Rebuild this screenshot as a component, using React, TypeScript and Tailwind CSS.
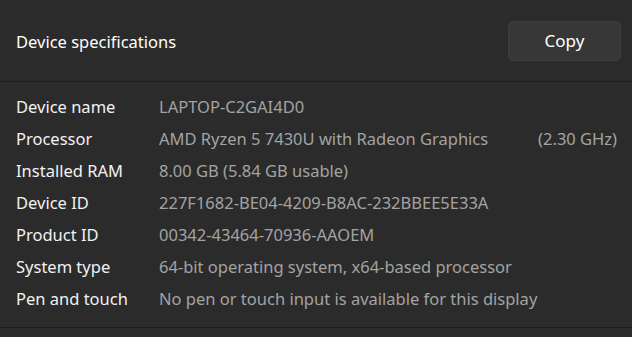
import React from "react";

const specs = [
  { label: "Device name", value: "LAPTOP-C2GAI4D0" },
  { label: "Processor", value: "AMD Ryzen 5 7430U with Radeon Graphics", extra: "(2.30 GHz)" },
  { label: "Installed RAM", value: "8.00 GB (5.84 GB usable)" },
  { label: "Device ID", value: "227F1682-BE04-4209-B8AC-232BBEE5E33A" },
  { label: "Product ID", value: "00342-43464-70936-AAOEM" },
  { label: "System type", value: "64-bit operating system, x64-based processor" },
  { label: "Pen and touch", value: "No pen or touch input is available for this display" },
];

export default function App() {
  return (
    <div
      className="w-[632px] h-[337px] bg-[#2b2b2b] text-white overflow-hidden"
      style={{ fontFamily: '"Noto Sans", "Open Sans", sans-serif' }}
    >
      {/* Header */}
      <div className="h-[81px] flex items-center justify-between pl-4 pr-[11px]">
        <h2 className="text-[16.5px] pt-[3px]">Device specifications</h2>
        <button className="w-[113px] h-[40px] rounded-[5px] bg-[#373737] border border-[#3e3e3e] text-[17px] text-white">
          Copy
        </button>
      </div>
      <div className="h-px bg-[#1d1d1d]" />

      {/* Specs */}
      <div className="pt-[9px] pb-[12px] pl-4 pr-[15px]">
        {specs.map((s) => (
          <div key={s.label} className="h-8 flex items-center text-[16.5px]">
            <div className="w-[143px] shrink-0 text-[#f2f2f2]">{s.label}</div>
            <div className="text-[#a3a3a3]">{s.value}</div>
            {s.extra && <div className="ml-auto text-[#a3a3a3]">{s.extra}</div>}
          </div>
        ))}
      </div>
      <div className="h-px bg-[#1d1d1d]" />
    </div>
  );
}
